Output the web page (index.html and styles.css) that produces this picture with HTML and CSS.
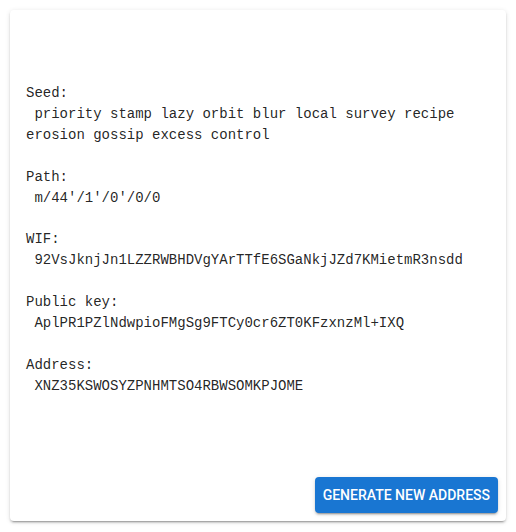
FILE: index.html
```html
<!DOCTYPE html>
<html>
<head>
<meta charset="utf-8">
<link rel="stylesheet" href="styles.css">
</head>
<body>
<div class="card">
<pre class="info">Seed:
 priority stamp lazy orbit blur local survey recipe erosion gossip excess control

Path:
 m/44'/1'/0'/0/0

WIF:
 92VsJknjJn1LZZRWBHDVgYArTTfE6SGaNkjJZd7KMietmR3nsdd

Public key:
 AplPR1PZlNdwpioFMgSg9FTCy0cr6ZT0KFzxnzMl+IXQ

Address:
 XNZ35KSWOSYZPNHMTSO4RBWSOMKPJOME</pre>
<div class="actions"><button class="btn">Generate new address</button></div>
</div>
</body>
</html>
```
FILE: styles.css
```css
html, body { margin: 0; padding: 0; background: #fff; }
body { padding: 10px; box-sizing: border-box; height: 532px; }
.card {
  box-sizing: border-box;
  width: 496px;
  height: 511px;
  background: #fff;
  border-radius: 4px;
  box-shadow: 0px 3px 1px -2px rgba(0,0,0,0.2), 0px 2px 2px 0px rgba(0,0,0,0.14), 0px 1px 5px 0px rgba(0,0,0,0.12);
  display: flex;
  flex-direction: column;
  padding: 0 8px 8px 16px;
}
.info {
  flex: 1;
  margin: 0;
  padding-top: 73px;
  padding-right: 8px;
  font-family: "Courier New", "Nimbus Mono PS", "Nimbus Mono L", "FreeMono", Courier, "Liberation Mono", monospace;
  font-size: 14px;
  line-height: 20.9px;
  color: rgba(0,0,0,0.87);
  white-space: pre-wrap;
  word-break: normal;
}
.actions { display: flex; justify-content: flex-end; }
.btn {
  font-family: Roboto, "Noto Sans", sans-serif;
  font-weight: 500;
  font-size: 14px;
  line-height: 24px;
  letter-spacing: 0;
  text-transform: uppercase;
  color: #fff;
  background: #1976d2;
  border: 0;
  border-radius: 4px;
  padding: 6px 8px;
  box-shadow: 0px 3px 1px -2px rgba(0,0,0,0.2), 0px 2px 2px 0px rgba(0,0,0,0.14), 0px 1px 5px 0px rgba(0,0,0,0.12);
}
```
